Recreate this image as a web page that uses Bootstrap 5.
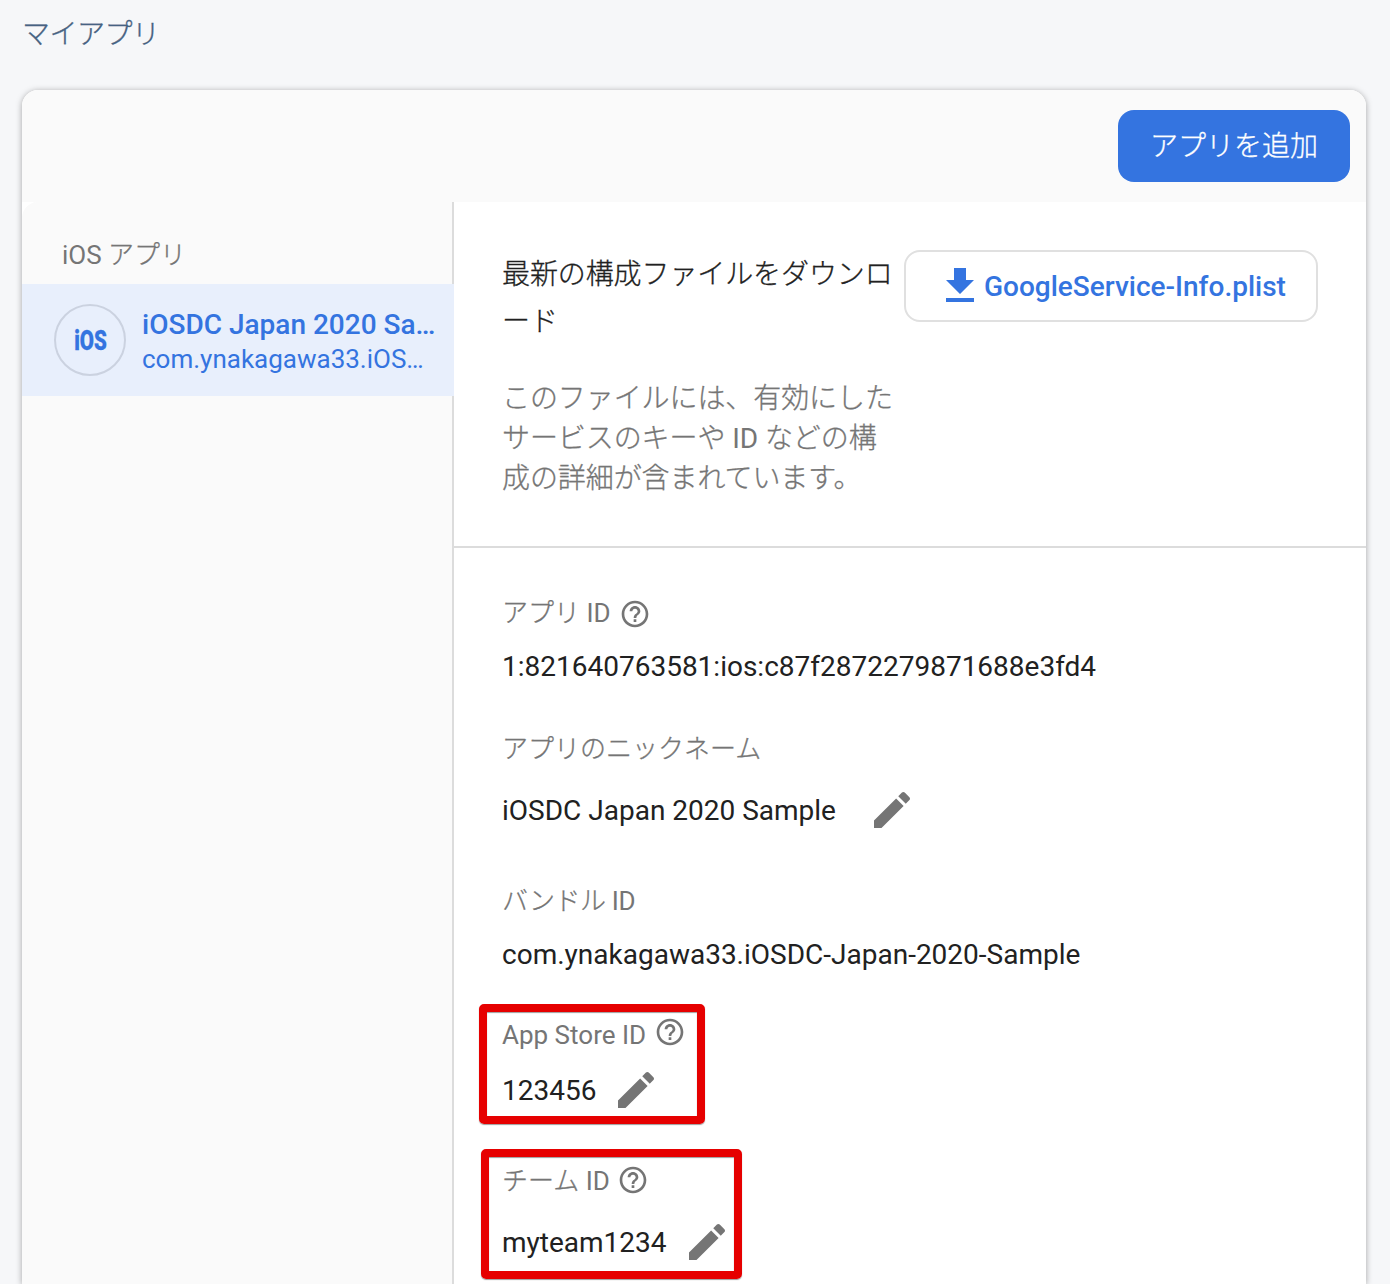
<!DOCTYPE html>
<html lang="ja">
<head>
<meta charset="utf-8">
<meta name="viewport" content="width=device-width, initial-scale=1">
<title>マイアプリ</title>
<link href="https://cdn.jsdelivr.net/npm/bootstrap@5.3.0/dist/css/bootstrap.min.css" rel="stylesheet">
<style>
  body { font-family: Roboto, "Noto Sans CJK JP", sans-serif; background: #f6f7f9; color: #212121; height: 1284px; overflow: hidden; font-size: 28px; line-height: 40px; }
  .jp { font-weight: 300; -webkit-text-stroke: .3px currentColor; }
  .page-title { font-size: 28px; letter-spacing: -.5px; color: #476282; padding: 15px 0 0 22px; height: 90px; margin: 0; line-height: 40px; }
  .apps-card { margin: 0 24px 0 22px; height: 1194px; border: 0; border-radius: 16px 16px 0 0; background: #fff; box-shadow: 0 1px 6px rgba(0,0,0,.34); overflow: hidden; }
  .apps-head { height: 112px; background: #fafafa; padding-right: 16px; flex: none; }
  .btn-add { width: 232px; height: 72px; border-radius: 16px; background: #3474e0; color: #fff; font-size: 28px; border: 0; padding: 2px 0 0; line-height: 70px; }
  .apps-side { width: 432px; background: #fafafa; border-top-left-radius: 16px; box-shadow: inset -2px 0 #dcdcdc; flex: none; }
  .side-label { height: 82px; padding: 33px 0 0 40px; font-size: 26px; color: #757575; }
  .app-item { height: 112px; background: #e8effc; color: #3474e0; padding: 0 16px 0 32px; }
  .app-logo { width: 72px; height: 72px; border: 2px solid #cbd2e0; border-radius: 50%; flex: none; font-size: 27px; font-weight: 900; line-height: 42px; -webkit-text-stroke: .3px currentColor; }
  .app-logo span { transform: scaleX(.76); padding-top: 2px; }
  .app-name { font-weight: 500; line-height: 36px; padding-top: 3px; }
  .app-bundle { font-size: 26px; line-height: 33px; }
  .download { height: 346px; border-bottom: 2px solid #dcdcdc; padding: 48px 48px 0; }
  .dl-head { line-height: 47px; padding-top: 1px; margin-bottom: 34px; letter-spacing: -.1px; }
  .dl-text { color: #757575; letter-spacing: -.08px; }
  .btn-file { width: 414px; height: 72px; border: 2px solid #e0e0e0; border-radius: 16px; color: #3474e0; font-size: 28px; font-weight: 500; padding: 0 0 0 40px; }
  .btn-file svg { margin-bottom: 2px; }
  .btn-file span { margin-left: 10px; padding-top: 2px; }
  .details { padding: 45px 48px 0; }
  .field { height: 40px; white-space: nowrap; }
  .value-text { line-height: 42px; }
  .value-text span { line-height: 40px; padding-top: 2px; }
  .caption-text { font-size: 26px; color: #757575; }
  .tight { letter-spacing: -.4px; }
  .g13 { margin-bottom: 13px; } .g15 { margin-bottom: 15px; } .g21 { margin-bottom: 21px; }
  .g41 { margin-bottom: 41px; } .g43 { margin-bottom: 43px; } .g51 { margin-bottom: 51px; }
  .details svg { fill: #757575; flex: none; }
  .help-low { margin-top: 2px; margin-left: 8px; }
  .help-high { margin-bottom: 6px; }
  .help-mid { margin-bottom: 2px; margin-left: 7px; }
  .frame { border: 8px solid #e60000; border-radius: 5px; box-shadow: 0 1px 1px rgba(60,60,60,.5), inset 0 1px 1px rgba(60,60,60,.5); }
  .frame-store { left: -23px; top: -11px; width: 226px; height: 120px; }
  .frame-team { left: -21px; top: -12px; width: 261px; height: 130px; }
</style>
</head>
<body>
<svg class="d-none">
  <symbol id="help" viewBox="0 0 24 24"><path d="M11 18h2v-2h-2v2zm1-16C6.48 2 2 6.48 2 12s4.48 10 10 10 10-4.48 10-10S17.520 2 12 2zm0 18c-4.410 0-8-3.590-8-8s3.590-8 8-8 8 3.590 8 8-3.590 8-8 8zm0-14c-2.210 0-4 1.790-4 4h2c0-1.100.9-2 2-2s2 .9 2 2c0 2-3 1.750-3 5h2c0-2.250 3-2.500 3-5 0-2.210-1.790-4-4-4z"/></symbol>
  <symbol id="pencil" viewBox="0 0 24 24"><path d="M3 17.250V21h3.750L17.810 9.940l-3.750-3.750L3 17.250zM20.710 7.040c.39-.39.39-1.020 0-1.410l-2.340-2.340c-.39-.39-1.020-.39-1.410 0l-1.830 1.830 3.750 3.750 1.830-1.830z"/></symbol>
</svg>

<h1 class="page-title jp">マイアプリ</h1>

<main class="apps-card card">
  <header class="apps-head d-flex align-items-center justify-content-end">
    <button class="btn btn-add jp">アプリを追加</button>
  </header>
  <div class="d-flex flex-grow-1">
    <aside class="apps-side">
      <div class="side-label"><span>iOS</span> <span class="jp">アプリ</span></div>
      <div class="app-item d-flex align-items-center gap-3">
        <div class="app-logo d-flex align-items-center justify-content-center"><span>iOS</span></div>
        <div class="text-nowrap">
          <div class="app-name">iOSDC Japan 2020 Sa…</div>
          <div class="app-bundle">com.ynakagawa33.iOS…</div>
        </div>
      </div>
    </aside>
    <section class="flex-grow-1">
      <div class="download d-flex justify-content-between align-items-start">
        <div class="text-nowrap">
          <div class="dl-head jp">最新の構成ファイルをダウンロ<br>ード</div>
          <div class="dl-text"><span class="jp">このファイルには、有効にした</span><br><span class="jp">サービスのキーや</span> ID <span class="jp">などの構</span><br><span class="jp">成の詳細が含まれています。</span></div>
        </div>
        <button class="btn btn-file d-flex align-items-center">
          <svg width="28" height="34" viewBox="0 0 28 34" fill="currentColor"><path d="M8 0h12v12h8L14 26 0 12h8zM0 30h28v4H0z"/></svg>
          <span>GoogleService-Info.plist</span>
        </button>
      </div>
      <div class="details">
        <div class="field caption-text d-flex align-items-center g13"><span><span class="jp">アプリ</span> ID</span><svg class="help-low" width="32" height="32"><use href="#help"/></svg></div>
        <div class="field value-text g43">1:821640763581:ios:c87f2872279871688e3fd4</div>

        <div class="field caption-text jp g21">アプリのニックネーム</div>
        <div class="field value-text d-flex align-items-center g51"><span>iOSDC Japan 2020 Sample</span><svg class="ms-4 ps-2" width="56" height="48"><use href="#pencil"/></svg></div>

        <div class="field caption-text tight g13"><span class="jp">バンドル</span> ID</div>
        <div class="field value-text g41">com.ynakagawa33.iOSDC-Japan-2020-Sample</div>

        <div class="position-relative g51">
          <div class="frame frame-store position-absolute"></div>
          <div class="field caption-text d-flex align-items-center g15"><span>App Store ID</span><svg class="ms-2 help-high" width="32" height="32"><use href="#help"/></svg></div>
          <div class="field value-text d-flex align-items-center"><span>123456</span><svg class="ms-3" width="48" height="48"><use href="#pencil"/></svg></div>
        </div>

        <div class="position-relative">
          <div class="frame frame-team position-absolute"></div>
          <div class="field caption-text d-flex align-items-center g21"><span><span class="jp">チーム</span> ID</span><svg class="help-mid" width="32" height="32"><use href="#help"/></svg></div>
          <div class="field value-text d-flex align-items-center"><span>myteam1234</span><svg class="ms-3" width="48" height="48"><use href="#pencil"/></svg></div>
        </div>
      </div>
    </section>
  </div>
</main>
<script src="https://cdn.jsdelivr.net/npm/bootstrap@5.3.0/dist/js/bootstrap.bundle.min.js"></script>
</body>
</html>
